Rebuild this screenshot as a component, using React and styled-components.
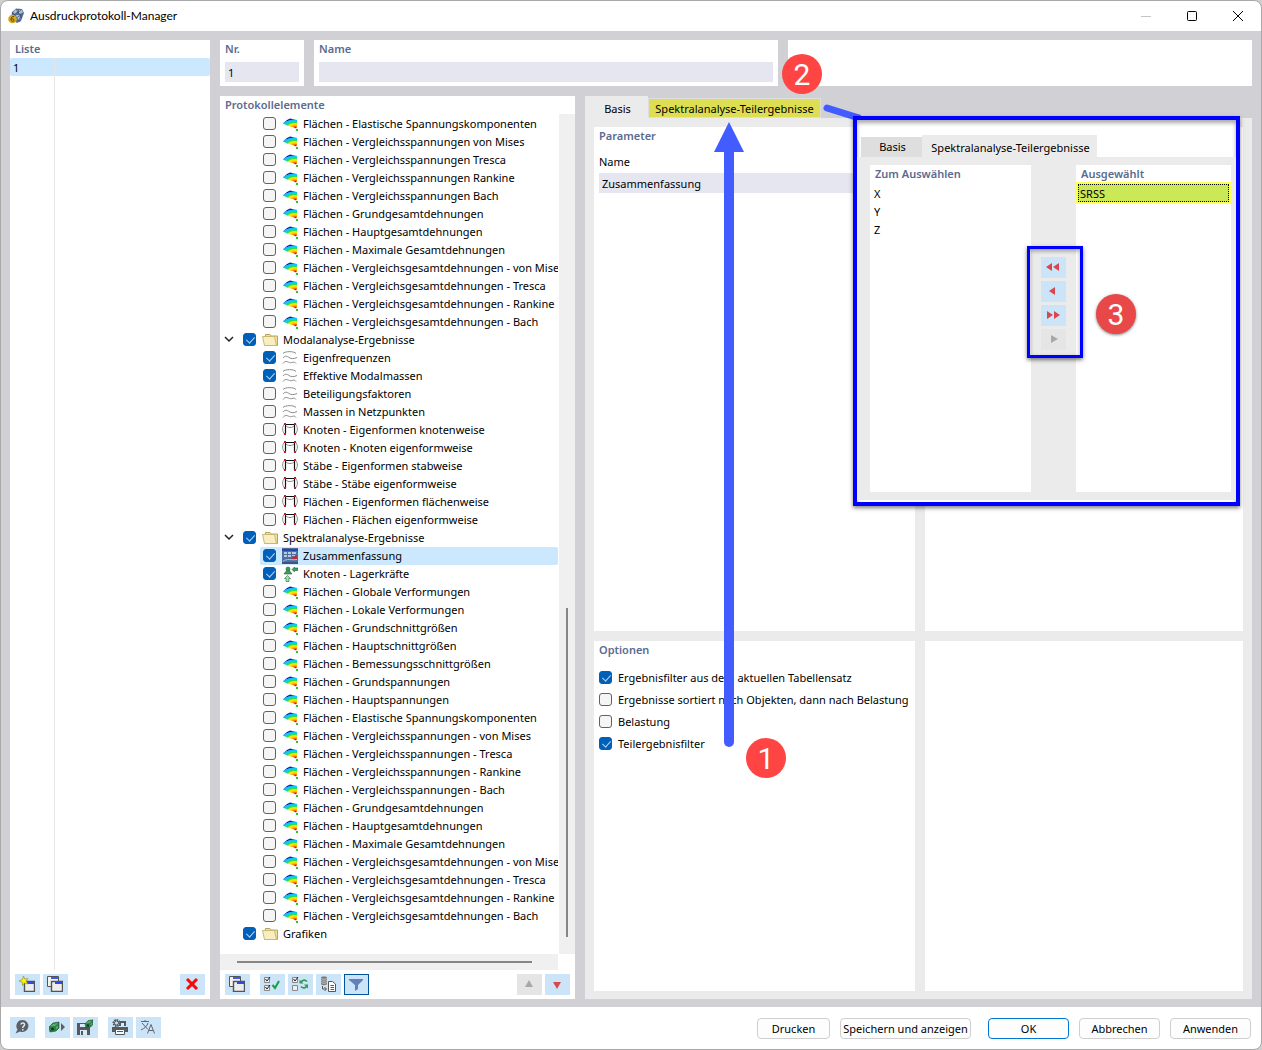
import React, { useState } from 'react';
import styled, { createGlobalStyle } from 'styled-components';

const GlobalStyle = createGlobalStyle`
  * {
    box-sizing: border-box;
  }
  body {
    margin: 0;
    background: #cfcfcf;
    color: #000;
    font-family: 'Noto Sans', 'Open Sans', sans-serif;
    font-size: 11px;
    line-height: 18px;
  }
  button, input {
    font: inherit;
    color: inherit;
  }
`;

// Window frame
const Window = styled.div`
  display: flex;
  flex-direction: column;
  min-height: 100vh;
  border: 1px solid #a8a8a8;
  border-radius: 8px;
  background: #fff;
  overflow: hidden;
`;

const TitleBar = styled.header`
  display: flex;
  align-items: center;
  height: 30px;
  padding-left: 7px;
`;

const Title = styled.h1`
  flex: 1;
  margin: 0 0 0 6px;
  font-family: Lato, sans-serif;
  font-size: 12px;
  font-weight: 400;
`;

const WindowButton = styled.button`
  display: flex;
  align-items: center;
  justify-content: center;
  width: 46px;
  height: 30px;
  padding: 0;
  border: 0;
  background: none;
`;

const Body = styled.main`
  flex: 1;
  display: flex;
  gap: 10px;
  padding: 9px 9px 8px;
  background: #d1d0d5;
`;

const Panel = styled.section`
  display: flex;
  flex-direction: column;
  background: #fff;
  min-width: 0;
`;

const ListPanel = styled(Panel)`
  width: 200px;
`;

const Heading = styled.h2`
  margin: 0;
  padding: 0 5px;
  color: #5b6b90;
  font-size: 11px;
  font-weight: 600;
  line-height: 18px;
`;

const FieldLabel = styled.label`
  padding: 0 5px;
  color: #5b6b90;
  font-weight: 600;
`;

const ListRow = styled.div`
  display: grid;
  grid-template-columns: 45px 1fr;
  flex: ${(p) => (p.$fill ? 1 : 'none')};
  min-height: 18px;
  border-radius: 2px;
  background: ${(p) => (p.$selected ? '#cce8ff' : 'none')};
`;

const ListCell = styled.div`
  padding-left: 3px;
  border-right: 1px solid #e6e6e6;
  line-height: 20px;
  height: ${(p) => (p.$row ? '18px' : 'auto')};

  &:last-child {
    border-right: 0;
  }
`;

const Toolbar = styled.div`
  display: flex;
  gap: 3px;
  padding: 4px 5px;
`;

const Gap = styled.span`
  flex: ${(p) => (p.$size ? 'none' : 1)};
  width: ${(p) => p.$size || 0}px;
`;

const ToolButton = styled.button`
  display: flex;
  align-items: center;
  justify-content: center;
  width: 25px;
  height: 21px;
  padding: 0 1px 1px 0;
  border: ${(p) => (p.$active ? '1px solid #00529b' : '0')};
  background: ${(p) => (p.disabled ? '#e5e5e5' : '#cce4f7')};
`;

const Content = styled.div`
  flex: 1;
  display: flex;
  flex-direction: column;
  gap: 10px;
  min-width: 0;
`;

const TopRow = styled.div`
  display: flex;
  gap: 10px;
`;

const TopPanel = styled(Panel)`
  flex: ${(p) => (p.$narrow ? '0 0 84px' : 1)};
  height: 46px;
`;

const TextField = styled.input`
  height: 20px;
  margin: ${(p) => (p.$top || 4)}px 5px 0;
  padding: 0 3px;
  border: 0;
  border-radius: 0;
  background: #e6e6f1;
  min-width: 0;
  outline: none;
`;

const MainRow = styled.div`
  flex: 1;
  display: flex;
  gap: 10px;
`;

const TreePanel = styled(Panel)`
  width: 355px;
`;

const TreeArea = styled.div`
  flex: 1;
  display: flex;
`;

const Tree = styled.ul`
  flex: 1;
  min-width: 0;
  margin: 0;
  padding: 1px 0 0;
  list-style: none;
  overflow: hidden;
`;

const TreeItem = styled.li`
  display: flex;
  align-items: center;
  height: 18px;
  margin: 0 1px 0 ${(p) => (p.$child ? 40 : 3)}px;
  padding-left: ${(p) => (p.$child ? 3 : 0)}px;
  border-radius: 2px;
  background: ${(p) => (p.$selected ? '#cce8ff' : 'none')};
  white-space: nowrap;
  overflow: hidden;
`;

const Expander = styled.button`
  display: flex;
  align-items: center;
  width: 20px;
  height: 18px;
  padding: 0 0 2px 1px;
  border: 0;
  background: none;
`;

const CheckLabel = styled.label`
  display: flex;
  align-items: center;
  white-space: nowrap;

  svg {
    flex: none;
    margin: 0 5px 1px 0;
  }
`;

const Checkbox = styled.input.attrs({ type: 'checkbox' })`
  appearance: none;
  flex: none;
  position: relative;
  width: 13px;
  height: 13px;
  margin: 0 6px 1px 0;
  border: 1px solid #626262;
  border-radius: 3px;
  background: #f5f5f5;

  &:checked {
    border-color: #005fb8;
    background: #005fb8;
  }
  &:checked::after {
    content: '';
    position: absolute;
    left: 4px;
    top: 1px;
    width: 4px;
    height: 7px;
    border: solid #b9d3ec;
    border-width: 0 1px 1px 0;
    transform: rotate(42deg);
  }
`;

const VerticalTrack = styled.div`
  display: flex;
  justify-content: center;
  align-items: flex-end;
  width: 16px;
  padding-bottom: 17px;
  background: #f0f0f0;
`;

const VerticalThumb = styled.div`
  width: 2px;
  height: 40%;
  background: #868686;
`;

const HorizontalTrack = styled.div`
  display: flex;
  align-items: center;
  height: 16px;
  margin-right: 17px;
  padding-left: 17px;
  background: #f0f0f0;
`;

const HorizontalThumb = styled.div`
  width: 92%;
  height: 2px;
  background: #868686;
`;

// Right side
const Details = styled.div`
  position: relative;
  flex: 1;
  display: flex;
  flex-direction: column;
  min-width: 0;
`;

const Tabs = styled.div`
  display: flex;
  align-items: flex-end;
  height: 22px;
`;

const Tab = styled.button`
  width: ${(p) => p.$width}px;
  height: ${(p) => (p.$raised ? 22 : 20)}px;
  padding: ${(p) => (p.$raised ? 3 : 0)}px 0 0 2px;
  border: 0;
  background: ${(p) => (p.$raised ? '#ebebeb' : '#dedede')};
  line-height: 18px;
  white-space: nowrap;
`;

const MarkedTab = styled(Tab)`
  padding: 2px 0 0;
  border: 1px solid #dededf;
  background: #dede52;
  line-height: 16px;
`;

const DetailGrid = styled.div`
  flex: 1;
  display: grid;
  grid-template-columns: 321px 1fr;
  grid-template-rows: 504fr 350fr;
  gap: 10px;
  padding: 9px 9px 8px;
  background: #ebebeb;
`;

const ParamLabel = styled.label`
  margin-top: 8px;
  padding: 0 5px;
`;

const Options = styled.div`
  display: flex;
  flex-direction: column;
  padding: 8px 5px;

  label {
    height: 22px;
  }
`;

// Annotations over the dialog
const Arrow = styled.svg`
  position: absolute;
  left: 129px;
  top: 26px;
`;

const Connector = styled.svg`
  position: absolute;
  left: 236px;
  top: 6px;
`;

const Badge = styled.span`
  position: absolute;
  left: ${(p) => p.$x}px;
  top: ${(p) => p.$y}px;
  width: 40px;
  height: 40px;
  border-radius: 50%;
  background: ${(p) => (p.$shadow ? '#e84848' : '#ff4444')};
  box-shadow: ${(p) => (p.$shadow ? '0 1px 3px rgba(0, 0, 0, 0.5)' : 'none')};
  color: #fff;
  font-family: Roboto, sans-serif;
  font-size: 30px;
  line-height: 41px;
  text-align: center;
`;

const Inset = styled.div`
  position: absolute;
  left: 268px;
  right: 12px;
  top: 20px;
  height: 390px;
  display: flex;
  flex-direction: column;
  padding: 15px 0 2px;
  border: 4px solid #0000ff;
  background: #fff;
  box-shadow: 0 2px 4px rgba(0, 0, 0, 0.5), inset 0 3px 4px rgba(0, 0, 0, 0.35);
`;

const InsetTabs = styled(Tabs)`
  padding-left: 4px;
`;

const InsetBody = styled.div`
  flex: 1;
  display: flex;
  padding: 8px 5px 8px 13px;
  background: #ebebeb;
`;

const PickPanel = styled(Panel)`
  flex: ${(p) => p.$grow};
`;

const PickList = styled.ul`
  margin: 0;
  padding: 2px 0 0;
  list-style: none;
`;

const PickItem = styled.li`
  padding-left: 4px;
`;

const PickedItem = styled.li`
  height: 22px;
  margin-top: -3px;
  padding: 2px;
  background: #ffff55;

  span {
    display: block;
    height: 18px;
    padding-left: 1px;
    border: 1px dotted #000;
    background: #cbe857;
    line-height: 17px;
  }
`;

const MoveButtons = styled.div`
  display: flex;
  flex-direction: column;
  align-items: center;
  gap: 3px;
  width: 45px;
  padding-top: 92px;
`;

const Marker = styled.div`
  position: absolute;
  left: 170px;
  top: 126px;
  width: 56px;
  height: 112px;
  border: 3px solid #0000ff;
  box-shadow: 0 2px 4px rgba(0, 0, 0, 0.5), inset 0 2px 4px rgba(0, 0, 0, 0.35);
  pointer-events: none;
`;

const Footer = styled.footer`
  display: flex;
  align-items: flex-start;
  gap: 3px;
  height: 42px;
  padding: 10px 10px 0 9px;
`;

const Actions = styled.div`
  display: flex;
  gap: 10px;
  padding-top: 1px;
`;

const ActionButton = styled.button`
  width: ${(p) => p.$width || 81}px;
  height: 21px;
  margin-left: ${(p) => (p.$primary ? 7 : 0)}px;
  padding: 0;
  border: 1px solid ${(p) => (p.$primary ? '#0078d4' : '#cfcfcf')};
  border-radius: 4px;
  background: #fdfdfd;
  line-height: 19px;
  white-space: nowrap;
`;

// Icons
const Svg = ({ children, size = 16 }) => (
  <svg width={size} height={size} viewBox={`0 0 ${size} ${size}`} fill="none" aria-hidden="true">
    {children}
  </svg>
);

// Shared colour scale of the surface icons, defined once per page
const SurfaceScale = styled.svg`
  position: absolute;
  width: 0;
  height: 0;
`;

const SurfaceDefs = () => (
  <SurfaceScale aria-hidden="true">
    <defs>
      <radialGradient
        id="surface-scale"
        gradientUnits="userSpaceOnUse"
        cx="0"
        cy="0"
        r="12"
        gradientTransform="translate(13 13) scale(1.5 1)"
      >
        <stop offset="0.14" stopColor="#d81818" />
        <stop offset="0.22" stopColor="#ff7a00" />
        <stop offset="0.34" stopColor="#ffd800" />
        <stop offset="0.46" stopColor="#e8f000" />
        <stop offset="0.54" stopColor="#30e040" />
        <stop offset="0.62" stopColor="#18d890" />
        <stop offset="0.66" stopColor="#00d8f8" />
        <stop offset="0.78" stopColor="#18a8f8" />
        <stop offset="0.82" stopColor="#1818b0" />
      </radialGradient>
    </defs>
  </SurfaceScale>
);

const SurfaceIcon = () => (
  <Svg>
    <path d="M1 7.500 L2 6.500 L5 4 L8 2.500 L15 4 V11 L14 12.500 L11 11 L6 10 Z" fill="url(#surface-scale)" />
    <path d="M1 7.500 L5 4.500 L5 7 Z" fill="#18b8f8" />
    <path d="M14 13 h2 v2 h-2z" fill="#2fc02f" />
  </Svg>
);

const WaveIcon = () => (
  <Svg>
    <g stroke="#8a8a8a">
      <path d="M1 3.500 C3 1 12 1 14 3.500" />
      <path d="M1 8 C3 5.500 5 6 7 7.500 S12 9 15 7.500" />
      <path d="M1 13.500 C3 10.500 5 11.500 7.500 12.500 S12 10.500 14 13.500" />
    </g>
  </Svg>
);

const FrameIcon = () => (
  <Svg>
    <path d="M3.500 12 V2.500 H12.500 V12" stroke="#111" strokeWidth="1.200" />
    <path d="M2.500 2 C0 5 0 9 2.500 12 M13.500 2 C16 5 16 9 13.500 12 M4 4 C6 6 10 6 12 4" stroke="#8a8a8a" />
    <path d="M2 1h2v2h-2z M12 1h2v2h-2z M2 11h2v2h-2z M12 11h2v2h-2z" fill="#c02030" />
  </Svg>
);

const FolderIcon = () => (
  <Svg>
    <path d="M3.5 11 V2.500 H8 L9.5 4 H15.5 V13.500 H2.5" fill="#f2e29b" stroke="#b7a45e" />
    <path d="M0.5 4.500 H12.5 L14.5 13.500 H2.5 Z" fill="#f8eec0" stroke="#c8b872" />
  </Svg>
);

const SummaryIcon = () => (
  <Svg>
    <path d="M0 0h16v16H0z" fill="#4f6f9f" />
    <path d="M0 1h16v2H0z" fill="#2549a8" />
    <path d="M2 4h3v2H2z M6 4h3v2H6z M10 4h4v2h-4z M2 7h3v2H2z M6 7h3v2H6z M10 7h3v1h-3z" fill="#b8cbe5" />
    <path d="M8 11 L15 7 V11 Z" fill="#b03040" />
    <path d="M1 13.500 C5 10 9 12.500 15 11.500" stroke="#a8c4e6" />
    <path d="M0 14h16v2H0z" fill="#3a5684" />
  </Svg>
);

const SupportIcon = () => (
  <Svg>
    <g fill="#3c9c5c" stroke="#1e6b38" strokeWidth="0.6">
      <circle cx="6" cy="3" r="2" />
      <path d="M5 4 H7 L10 8 H2 Z" />
      <path d="M10 3.500 L12.500 1 V2 H16 V4.500 H12.500 V6 Z" />
      <path d="M5.500 9.500 L8.500 12.500 H7 V15.500 H4 V12.500 H2.500 Z" fill="#a6dcb6" />
    </g>
  </Svg>
);

const AppIcon = () => (
  <Svg>
    <path d="M4 4 L8 0.500 L14 1 L16 5 L13 13 L9 15 L3 11 Z" fill="#5a7094" />
    <path d="M5 4 L8 1 L10 3 L7 6 Z M11 2 L14 2 L15 5 L11 6 Z M8 7 L12 7 L11 12 L9 11 Z" fill="#a9bfe0" />
    <path d="M4 4 L12 14 M8 1 L14 10 M3 9 L13 2 M6 12 L15 5" stroke="#34465f" strokeWidth="0.600" />
    <circle cx="4.500" cy="11" r="4.300" fill="#d8a91f" />
    <path d="M6 8.500 C4 8 3 9.500 3 11.500 C3 14 6 14 6 12 C6 10.500 3.500 10.500 3 11.500" stroke="#5a4708" />
  </Svg>
);

const CopyIcon = () => (
  <Svg>
    <path d="M0.500 0.500h11v10h-11z" fill="#f2f2f2" stroke="#555" />
    <path d="M4 1h7v2H4z" fill="#3c5cf0" />
    <path d="M4.500 5.500h11v10h-11z" fill="#eee" stroke="#555" strokeWidth="1.400" />
    <path d="M8 6h7v2H8z" fill="#2c4ce8" />
  </Svg>
);

const NewIcon = () => (
  <Svg>
    <path d="M5.500 5.500h10v10h-10z" fill="#eee" stroke="#555" strokeWidth="1.400" />
    <path d="M8 6h7v2H8z" fill="#2c4ce8" />
    <path d="M4.500 0 L5.700 3 L9 2.500 L7 5 L9 8 L5.500 7 L3.500 9.500 L3.300 6.300 L0 5 L3.300 3.500 Z" fill="#fff200" stroke="#8c8420" strokeWidth="0.600" />
  </Svg>
);

const DeleteIcon = () => (
  <Svg>
    <path d="M3 3 L13 13 M13 3 L3 13" stroke="#f80808" strokeWidth="3" />
  </Svg>
);

const Ticks = ({ second }) => (
  <>
    <path d="M0.500 1.500h5v5h-5z M0.500 9.500h5v5h-5z" stroke="#888" fill="#eee" />
    <path d="M1.500 3 L3 5 L6 1" stroke="#222" />
    {second && <path d="M1.500 11 L3 13 L6 9" stroke="#222" />}
  </>
);

const SelectAllIcon = () => (
  <Svg>
    <Ticks second />
    <path d="M8.500 9 L11 12 L15 5" stroke="#14a044" strokeWidth="2" />
  </Svg>
);

const InvertIcon = () => (
  <Svg>
    <Ticks />
    <path d="M9 6 C11 3.500 13 3.500 15 5.500 M15 10 C13 12.500 11 12.500 9 10.500" stroke="#2e9a52" strokeWidth="1.700" />
    <path d="M7.500 3.500 V7.500 H11.500 Z M16 12.500 V8.500 H12 Z" fill="#2e9a52" />
  </Svg>
);

const DataIcon = () => (
  <Svg>
    <path d="M1 1.500 C1 0 7 0 7 1.500 V8 C7 9.500 1 9.500 1 8 Z" fill="#777" />
    <path d="M1 2.500 C3 3.500 5 3.500 7 2.500 M1 4.500 C3 5.500 5 5.500 7 4.500 M1 6.500 C3 7.500 5 7.500 7 6.500" stroke="#e4e4e4" strokeWidth="0.700" />
    <path d="M2.500 10 V13 H6 M4.500 11 L6.500 13 L4.500 15" stroke="#555" />
    <path d="M8.500 5.500 H12.500 L15.500 8 V15.500 H8.500 Z" fill="#fff" stroke="#555" />
    <path d="M10.500 9.500h3.500 M10.500 11.500h3.500 M10.500 13.500h3.500" stroke="#555" />
  </Svg>
);

const FilterIcon = () => (
  <Svg>
    <path d="M1 3 H15 V4 L10 9 V13 L7 15 V9 L1 4 Z" fill="#6280bd" />
  </Svg>
);

const HelpIcon = () => (
  <Svg>
    <path d="M8.500 1 A6 6 0 1 1 6 12.500 L1.500 14.500 L3.500 10.500 A6 6 0 0 1 8.500 1" fill="#5c6066" />
    <path d="M7 5.500 C7 3.500 11 3.500 10.500 6 C10.300 7.200 8.700 7 8.700 9 M8.700 10 V11.500" stroke="#d8eaf8" strokeWidth="1.500" />
  </Svg>
);

const Cube = () => (
  <>
    <path d="M0 6 L4 2 L10 1 V7 L7 10 L1 11 Z" fill="#2f8048" stroke="#1b4a2a" strokeWidth="0.600" />
    <path d="M1 5.500 L4 3 L9 2 L6 5 Z M7 6 L9 4.500 V6.500 L7 8.500 Z" fill="#5cae74" />
    <circle cx="3.500" cy="8" r="1.500" fill="#123a1e" />
  </>
);

const ImportIcon = () => (
  <Svg>
    <g transform="translate(0 2)"><Cube /></g>
    <path d="M12 4 L16 8 L12 12 Z" fill="#606060" />
  </Svg>
);

const SaveIcon = () => (
  <Svg>
    <path d="M0 4 H11 L13 6 V16 H0 Z" fill="#55595e" />
    <path d="M3 5 H9 V8 H3 Z M3 11 H10 V16 H3 Z" fill="#d8eaf8" />
    <path d="M4 12 H6 V16 H4 Z" fill="#55595e" />
    <g transform="translate(8 0) scale(0.8)"><Cube /></g>
  </Svg>
);

const PrinterIcon = () => (
  <Svg>
    <path d="M0 8 H16 V13 H0 Z M7 2 H14 V7 H7 Z" fill="#55595e" />
    <path d="M9 4 H12 V7 H9 Z" fill="#d8eaf8" />
    <circle cx="4.500" cy="4" r="3" fill="#cce4f7" stroke="#55595e" strokeWidth="2" strokeDasharray="1.600 0.700" />
    <circle cx="4.500" cy="4" r="2" stroke="#55595e" />
    <path d="M3.500 10.500h9v5h-9z" fill="#f2f8fc" stroke="#55595e" />
    <path d="M5 12.500h6" stroke="#55595e" />
  </Svg>
);

const TranslateIcon = () => (
  <Svg>
    <path d="M1 2.500 H9 M5 1 V3 M2 4 L8 10.500 M8 4 C7 7 5 9 1 11" stroke="#62666c" />
    <path d="M7.500 14.500 L11 5.500 L14.500 14.500 M9 11.500 H13" stroke="#62666c" />
  </Svg>
);

const triangles = {
  up: 'M8 4 L12 11 H4 Z',
  down: 'M4 6 H12 L8 13 Z',
  left: 'M4 8 L10 4 V12 Z',
  right: 'M13 8 L6 4 V12 Z',
  allLeft: 'M1 8 L7 4 V12 Z M8 8 L14 4 V12 Z',
  allRight: 'M15 8 L9 4 V12 Z M8 8 L2 4 V12 Z',
};

const Triangle = ({ dir, color = '#d9474c' }) => (
  <Svg><path d={triangles[dir]} fill={color} /></Svg>
);

const Chevron = () => (
  <Svg size={10}><path d="M1 3 L5 7 L9 3" stroke="#222" strokeWidth="1.500" /></Svg>
);

const icons = {
  surface: SurfaceIcon,
  wave: WaveIcon,
  frame: FrameIcon,
  folder: FolderIcon,
  summary: SummaryIcon,
  support: SupportIcon,
};

const surface = (name) => ({ name: `Flächen - ${name}`, icon: 'surface' });

const treeData = [
  ...[
    'Elastische Spannungskomponenten',
    'Vergleichsspannungen von Mises',
    'Vergleichsspannungen Tresca',
    'Vergleichsspannungen Rankine',
    'Vergleichsspannungen Bach',
    'Grundgesamtdehnungen',
    'Hauptgesamtdehnungen',
    'Maximale Gesamtdehnungen',
    'Vergleichsgesamtdehnungen - von Mises',
    'Vergleichsgesamtdehnungen - Tresca',
    'Vergleichsgesamtdehnungen - Rankine',
    'Vergleichsgesamtdehnungen - Bach',
  ].map(surface),
  { name: 'Modalanalyse-Ergebnisse', icon: 'folder', group: true, open: true, checked: true },
  { name: 'Eigenfrequenzen', icon: 'wave', checked: true },
  { name: 'Effektive Modalmassen', icon: 'wave', checked: true },
  { name: 'Beteiligungsfaktoren', icon: 'wave' },
  { name: 'Massen in Netzpunkten', icon: 'wave' },
  { name: 'Knoten - Eigenformen knotenweise', icon: 'frame' },
  { name: 'Knoten - Knoten eigenformweise', icon: 'frame' },
  { name: 'Stäbe - Eigenformen stabweise', icon: 'frame' },
  { name: 'Stäbe - Stäbe eigenformweise', icon: 'frame' },
  { name: 'Flächen - Eigenformen flächenweise', icon: 'frame' },
  { name: 'Flächen - Flächen eigenformweise', icon: 'frame' },
  { name: 'Spektralanalyse-Ergebnisse', icon: 'folder', group: true, open: true, checked: true },
  { name: 'Zusammenfassung', icon: 'summary', checked: true, selected: true },
  { name: 'Knoten - Lagerkräfte', icon: 'support', checked: true },
  ...[
    'Globale Verformungen',
    'Lokale Verformungen',
    'Grundschnittgrößen',
    'Hauptschnittgrößen',
    'Bemessungsschnittgrößen',
    'Grundspannungen',
    'Hauptspannungen',
    'Elastische Spannungskomponenten',
    'Vergleichsspannungen - von Mises',
    'Vergleichsspannungen - Tresca',
    'Vergleichsspannungen - Rankine',
    'Vergleichsspannungen - Bach',
    'Grundgesamtdehnungen',
    'Hauptgesamtdehnungen',
    'Maximale Gesamtdehnungen',
    'Vergleichsgesamtdehnungen - von Mises',
    'Vergleichsgesamtdehnungen - Tresca',
    'Vergleichsgesamtdehnungen - Rankine',
    'Vergleichsgesamtdehnungen - Bach',
  ].map(surface),
  { name: 'Grafiken', icon: 'folder', group: true, checked: true },
];

const options = [
  { name: 'Ergebnisfilter aus dem aktuellen Tabellensatz', checked: true },
  { name: 'Ergebnisse sortiert nach Objekten, dann nach Belastung' },
  { name: 'Belastung' },
  { name: 'Teilergebnisfilter', checked: true },
];

const TreeRow = ({ item }) => {
  const [checked, setChecked] = useState(Boolean(item.checked));
  const Icon = icons[item.icon];

  return (
    <TreeItem $child={!item.group} $selected={item.selected}>
      {item.group && (
        <Expander aria-label={item.name}>{item.open && <Chevron />}</Expander>
      )}
      <CheckLabel>
        <Checkbox checked={checked} onChange={() => setChecked(!checked)} />
        <Icon />
        {item.name}
      </CheckLabel>
    </TreeItem>
  );
};

const ProtocolTree = () => (
  <TreePanel>
    <Heading>Protokollelemente</Heading>
    <TreeArea>
      <Tree>
        {treeData.map((item, i) => (
          <TreeRow key={i} item={item} />
        ))}
      </Tree>
      <VerticalTrack><VerticalThumb /></VerticalTrack>
    </TreeArea>
    <HorizontalTrack><HorizontalThumb /></HorizontalTrack>
    <Toolbar>
      <ToolButton aria-label="Kopieren"><CopyIcon /></ToolButton>
      <Gap $size={4} />
      <ToolButton aria-label="Alle auswählen"><SelectAllIcon /></ToolButton>
      <ToolButton aria-label="Auswahl umkehren"><InvertIcon /></ToolButton>
      <ToolButton aria-label="Daten"><DataIcon /></ToolButton>
      <ToolButton aria-label="Filter" $active><FilterIcon /></ToolButton>
      <Gap />
      <ToolButton aria-label="Nach oben" disabled><Triangle dir="up" color="#a8a8a8" /></ToolButton>
      <ToolButton aria-label="Nach unten"><Triangle dir="down" /></ToolButton>
    </Toolbar>
  </TreePanel>
);

const FilterInset = () => (
  <Inset>
    <InsetTabs>
      <Tab $width={61}>Basis</Tab>
      <Tab $width={175} $raised>Spektralanalyse-Teilergebnisse</Tab>
    </InsetTabs>
    <InsetBody>
      <PickPanel $grow={161}>
        <Heading>Zum Auswählen</Heading>
        <PickList>
          <PickItem>X</PickItem>
          <PickItem>Y</PickItem>
          <PickItem>Z</PickItem>
        </PickList>
      </PickPanel>
      <MoveButtons>
        <ToolButton aria-label="Alle entfernen"><Triangle dir="allLeft" /></ToolButton>
        <ToolButton aria-label="Entfernen"><Triangle dir="left" /></ToolButton>
        <ToolButton aria-label="Alle hinzufügen"><Triangle dir="allRight" /></ToolButton>
        <ToolButton aria-label="Hinzufügen" disabled><Triangle dir="right" color="#a8a8a8" /></ToolButton>
      </MoveButtons>
      <PickPanel $grow={155}>
        <Heading>Ausgewählt</Heading>
        <PickList>
          <PickedItem><span>SRSS</span></PickedItem>
        </PickList>
      </PickPanel>
    </InsetBody>
    <Marker />
    <Badge $x={239} $y={174} $shadow>3</Badge>
  </Inset>
);

const DetailArea = () => (
  <Details>
    <Tabs>
      <Tab $width={63} $raised>Basis</Tab>
      <MarkedTab $width={173}>Spektralanalyse-Teilergebnisse</MarkedTab>
    </Tabs>
    <DetailGrid>
      <Panel>
        <Heading>Parameter</Heading>
        <ParamLabel htmlFor="param-name">Name</ParamLabel>
        <TextField id="param-name" $top={2} defaultValue="Zusammenfassung" />
      </Panel>
      <Panel />
      <Panel>
        <Heading>Optionen</Heading>
        <Options>
          {options.map((o) => (
            <CheckLabel key={o.name}>
              <Checkbox defaultChecked={o.checked} />
              {o.name}
            </CheckLabel>
          ))}
        </Options>
      </Panel>
      <Panel />
    </DetailGrid>
    <Arrow width="30" height="626" aria-hidden="true">
      <path d="M15 0 L30 30 H0 Z" fill="#435cff" />
      <path d="M15 28 V620" stroke="#435cff" strokeWidth="10" strokeLinecap="round" />
    </Arrow>
    <Connector width="40" height="22" aria-hidden="true">
      <path d="M6 6 L38 16" stroke="#435cff" strokeWidth="7" strokeLinecap="round" />
    </Connector>
    <Badge $x={161} $y={642}>1</Badge>
    <Badge $x={197} $y={-42}>2</Badge>
    <FilterInset />
  </Details>
);

const App = () => (
  <>
    <GlobalStyle />
    <SurfaceDefs />
    <Window>
      <TitleBar>
        <AppIcon />
        <Title>Ausdruckprotokoll-Manager</Title>
        <WindowButton aria-label="Minimieren">
          <Svg size={10}><path d="M0 5.500h10" stroke="#c4c4c4" /></Svg>
        </WindowButton>
        <WindowButton aria-label="Maximieren">
          <Svg size={10}><rect x="0.500" y="0.500" width="9" height="9" rx="1" stroke="#000" /></Svg>
        </WindowButton>
        <WindowButton aria-label="Schließen">
          <Svg size={10}><path d="M0 0 L10 10 M10 0 L0 10" stroke="#000" /></Svg>
        </WindowButton>
      </TitleBar>
      <Body>
        <ListPanel>
          <Heading>Liste</Heading>
          <ListRow $selected>
            <ListCell $row>1</ListCell>
            <ListCell $row />
          </ListRow>
          <ListRow $fill>
            <ListCell />
            <ListCell />
          </ListRow>
          <Toolbar>
            <ToolButton aria-label="Neu"><NewIcon /></ToolButton>
            <ToolButton aria-label="Kopieren"><CopyIcon /></ToolButton>
            <Gap />
            <ToolButton aria-label="Löschen"><DeleteIcon /></ToolButton>
          </Toolbar>
        </ListPanel>
        <Content>
          <TopRow>
            <TopPanel $narrow>
              <FieldLabel htmlFor="nr">Nr.</FieldLabel>
              <TextField id="nr" defaultValue="1" />
            </TopPanel>
            <TopPanel>
              <FieldLabel htmlFor="name">Name</FieldLabel>
              <TextField id="name" />
            </TopPanel>
            <TopPanel />
          </TopRow>
          <MainRow>
            <ProtocolTree />
            <DetailArea />
          </MainRow>
        </Content>
      </Body>
      <Footer>
        <ToolButton aria-label="Hilfe"><HelpIcon /></ToolButton>
        <Gap $size={4} />
        <ToolButton aria-label="Importieren"><ImportIcon /></ToolButton>
        <ToolButton aria-label="Speichern"><SaveIcon /></ToolButton>
        <Gap $size={4} />
        <ToolButton aria-label="Druckereinstellungen"><PrinterIcon /></ToolButton>
        <ToolButton aria-label="Sprache"><TranslateIcon /></ToolButton>
        <Gap />
        <Actions>
          <ActionButton $width={73}>Drucken</ActionButton>
          <ActionButton $width={131}>Speichern und anzeigen</ActionButton>
          <ActionButton $primary>OK</ActionButton>
          <ActionButton>Abbrechen</ActionButton>
          <ActionButton>Anwenden</ActionButton>
        </Actions>
      </Footer>
    </Window>
  </>
);

export default App;
